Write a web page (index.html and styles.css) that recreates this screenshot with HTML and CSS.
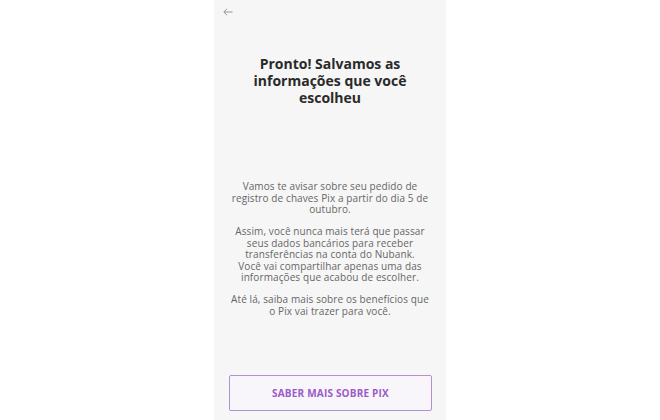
FILE: index.html
```html
<!DOCTYPE html>
<html lang="pt-BR">
<head>
<meta charset="utf-8">
<title>Pix</title>
<link rel="stylesheet" href="styles.css">
</head>
<body>
<main class="phone">
  <header class="topbar">
    <svg class="back" width="10" height="8" viewBox="0 0 10 8" aria-label="Voltar">
      <path d="M9.5 4H1M4 0.8L0.8 4L4 7.2" fill="none" stroke="#8a8a8a" stroke-width="0.9"/>
    </svg>
  </header>
  <h1 class="title">Pronto! Salvamos as informações que você escolheu</h1>
  <section class="text">
    <p>Vamos te avisar sobre seu pedido de registro de chaves Pix a partir do dia 5 de outubro.</p>
    <p>Assim, você nunca mais terá que passar seus dados bancários para receber transferências na conta do Nubank.<br>Você vai compartilhar apenas uma das informações que acabou de escolher.</p>
    <p>Até lá, saiba mais sobre os benefícios que o Pix vai trazer para você.</p>
  </section>
  <button class="cta">SABER MAIS SOBRE PIX</button>
</main>
</body>
</html>
```

FILE: styles.css
```css
html, body {
  margin: 0;
  padding: 0;
  background: #ffffff;
}
body {
  display: flex;
  justify-content: center;
  font-family: "Open Sans", "Liberation Sans", sans-serif;
}
.phone {
  width: 232px;
  height: 420px;
  background: #f6f6f6;
  display: flex;
  flex-direction: column;
  box-sizing: border-box;
}
.topbar {
  height: 24px;
  display: flex;
  align-items: center;
  padding-left: 9px;
}
.back {
  display: block;
}
.title {
  margin: 31px 22px 0;
  font-size: 14px;
  line-height: 17px;
  font-weight: 700;
  color: #2a2a2a;
  text-align: center;
}
.text {
  margin: 75px 13px 0;
  font-size: 10px;
  letter-spacing: 0.1px;
  line-height: 11.5px;
  color: #666666;
  text-align: center;
}
.text p {
  margin: 0 0 10.5px;
}
.cta {
  margin: auto 14px 9px 15px;
  height: 36px;
  background: #f8f6fa;
  border: 1.5px solid #b58fd4;
  border-radius: 2px;
  color: #9a5bc6;
  font-family: "Open Sans", "Liberation Sans", sans-serif;
  font-weight: 700;
  font-size: 10px;
  letter-spacing: 0.2px;
}
```
